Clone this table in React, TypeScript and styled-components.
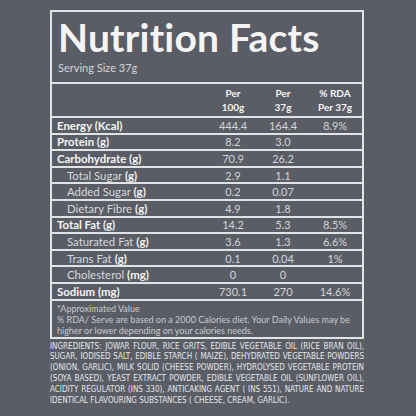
import React from "react";
import styled, { createGlobalStyle } from "styled-components";

const GlobalStyle = createGlobalStyle`
  html, body {
    margin: 0;
    padding: 0;
    background: #5a5d66;
  }
  body {
    width: 416px;
    height: 416px;
    overflow: hidden;
    font-family: Lato, "Noto Sans", sans-serif;
    color: #f2f2f2;
  }
`;

const Page = styled.div`
  padding: 10px 0 0 50px;
  width: 314px;
`;

const Panel = styled.div`
  border: 2px solid #e2e3e5;
`;

const Header = styled.div`
  box-sizing: border-box;
  height: 72px;
  padding: 5px 6px 0;
  border-bottom: 2px solid #e2e3e5;
`;

const Title = styled.h1`
  margin: 0;
  font-size: 39px;
  line-height: 40px;
  font-weight: 700;
  color: #f4f4f4;
  letter-spacing: 0.2px;
`;

const Serving = styled.div`
  margin-top: 4px;
  font-size: 11px;
  line-height: 13px;
  color: #d4d5d8;
`;

const Row = styled.div<{ head?: boolean }>`
  display: grid;
  grid-template-columns: 156px 50px 50px 1fr;
  align-items: center;
  height: ${(p) => (p.head ? "32px" : "14.6px")};
  border-bottom: 2px solid #e2e3e5;
`;

const HeadCell = styled.div`
  text-align: center;
  font-size: 10px;
  font-weight: 700;
  line-height: 14px;
  color: #f4f4f4;
`;

const Label = styled.div<{ sub?: boolean; bold?: boolean }>`
  padding-left: ${(p) => (p.sub ? "15px" : "5px")};
  font-size: 11.4px;
  font-weight: ${(p) => (p.bold ? 700 : 400)};
  color: ${(p) => (p.bold ? "#f4f4f4" : "#d8d9dc")};
  white-space: nowrap;

  & b {
    font-weight: 700;
    color: #f4f4f4;
  }
`;

const Value = styled.div`
  text-align: center;
  font-size: 11px;
  color: #d4d5d8;
`;

const Footnote = styled.div`
  padding: 2px 8px 1px 5px;
  font-size: 9px;
  line-height: 11px;
  color: #c9cacd;
`;

const Ingredients = styled.p`
  margin: 3px 0 0;
  font-family: "Liberation Sans Narrow", "DejaVu Sans Condensed", "Roboto", sans-serif;
  font-size: 8px;
  line-height: 10.9px;
  text-align: justify;
  text-transform: uppercase;
  color: #e6e7e9;
`;

type Nutrient = {
  name: string;
  unit: string;
  per100: string;
  per37: string;
  rda?: string;
  sub?: boolean;
};

const nutrients: Nutrient[] = [
  { name: "Energy", unit: "(Kcal)", per100: "444.4", per37: "164.4", rda: "8.9%" },
  { name: "Protein", unit: "(g)", per100: "8.2", per37: "3.0" },
  { name: "Carbohydrate", unit: "(g)", per100: "70.9", per37: "26.2" },
  { name: "Total Sugar", unit: "(g)", per100: "2.9", per37: "1.1", sub: true },
  { name: "Added Sugar", unit: "(g)", per100: "0.2", per37: "0.07", sub: true },
  { name: "Dietary Fibre", unit: "(g)", per100: "4.9", per37: "1.8", sub: true },
  { name: "Total Fat", unit: "(g)", per100: "14.2", per37: "5.3", rda: "8.5%" },
  { name: "Saturated Fat", unit: "(g)", per100: "3.6", per37: "1.3", rda: "6.6%", sub: true },
  { name: "Trans Fat", unit: "(g)", per100: "0.1", per37: "0.04", rda: "1%", sub: true },
  { name: "Cholesterol", unit: "(mg)", per100: "0", per37: "0", sub: true },
  { name: "Sodium", unit: "(mg)", per100: "730.1", per37: "270", rda: "14.6%" },
];

const App: React.FC = () => (
  <>
    <GlobalStyle />
    <Page>
      <Panel>
        <Header>
          <Title>Nutrition Facts</Title>
          <Serving>Serving Size 37g</Serving>
        </Header>
        <Row head>
          <div />
          <HeadCell>
            Per
            <br />
            100g
          </HeadCell>
          <HeadCell>
            Per
            <br />
            37g
          </HeadCell>
          <HeadCell>
            % RDA
            <br />
            Per 37g
          </HeadCell>
        </Row>
        {nutrients.map((n) => (
          <Row key={n.name}>
            <Label sub={n.sub} bold={!n.sub}>
              {n.name} <b>{n.unit}</b>
            </Label>
            <Value>{n.per100}</Value>
            <Value>{n.per37}</Value>
            <Value>{n.rda ?? ""}</Value>
          </Row>
        ))}
        <Footnote>
          *Approximated Value
          <br />
          % RDA/ Serve are based on a 2000 Calories diet. Your Daily Values may be
          higher or lower depending on your calories needs.
        </Footnote>
      </Panel>
      <Ingredients>
        Ingredients: Jowar flour, rice grits, edible vegetable oil (rice bran oil),
        sugar, iodised salt, edible starch ( maize), dehydrated vegetable powders
        (onion, garlic), milk solid (cheese powder), hydrolysed vegetable protein
        (soya based), yeast extract powder, edible vegetable oil (sunflower oil),
        acidity regulator (ins 330), anticaking agent ( ins 551), nature and nature
        identical flavouring substances ( cheese, cream, garlic).
      </Ingredients>
    </Page>
  </>
);

export default App;
